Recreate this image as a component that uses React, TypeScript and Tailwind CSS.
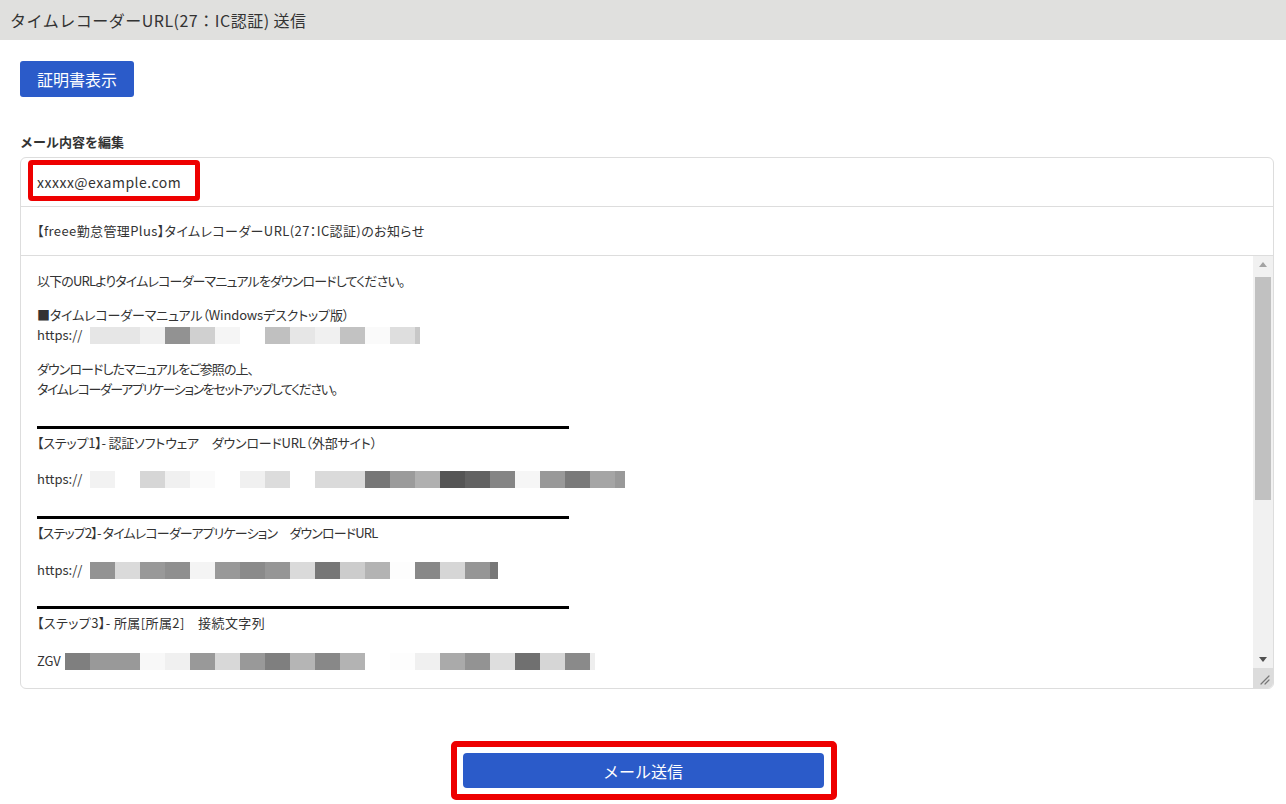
import React from 'react';

const FONT = "font-['Noto_Sans_CJK_JP','Noto_Sans',sans-serif]";

// mosaic blocks hiding the urls (25px cells, last one may be partial)
const url1 = ['#e6e6e6', '#e6e6e6', '#f0f0f0', '#929292', '#d0d0d0', '#f5f5f5', '#ffffff', '#c0c0c0', '#e6e6e6', '#f0f0f0', '#c2c2c2', '#fafafa', '#dedede'];
const url2 = ['#f2f2f2', '#ffffff', '#d6d6d6', '#f0f0f0', '#fafafa', '#ffffff', '#f0f0f0', '#dcdcdc', '#ffffff', '#dadada', '#dadada', '#777777', '#9b9b9b', '#b0b0b0', '#555555', '#626262', '#858585', '#f6f6f6', '#999999', '#7a7a7a', '#a5a5a5'];
const url3 = ['#939393', '#dadada', '#999999', '#8f8f8f', '#f4f4f4', '#999999', '#8a8a8a', '#969696', '#dadada', '#777777', '#cccccc', '#b3b3b3', '#fdfdfd', '#888888', '#d6d6d6', '#969696'];
const url4 = ['#7f7f7f', '#999999', '#999999', '#f8f8f8', '#f0f0f0', '#999999', '#d8d8d8', '#999999', '#7f7f7f', '#b5b5b5', '#888888', '#b3b3b3', '#ffffff', '#fdfdfd', '#f0f0f0', '#aaaaaa', '#939393', '#dedede', '#707070', '#d6d6d6', '#8a8a8a'];

function Mosaic({ cells, tail, tailWidth }: { cells: string[]; tail: string; tailWidth: number }) {
  return (
    <span className="inline-flex h-[17px]">
      {cells.map((c, i) => (
        <span key={i} className="w-[25px] h-full" style={{ backgroundColor: c }} />
      ))}
      <span className="h-full" style={{ backgroundColor: tail, width: tailWidth }} />
    </span>
  );
}

function Line({ children, className = '' }: { children: React.ReactNode; className?: string }) {
  return <div className={`h-[20px] leading-[20px] flex items-center whitespace-nowrap ${className}`}>{children}</div>;
}

function Separator({ className = '' }: { className?: string }) {
  return <div className={`w-[532px] h-[3px] bg-black ${className}`} />;
}

export default function App() {
  return (
    <div className={`${FONT} bg-white min-h-[804px] text-[#333]`}>
      {/* title bar */}
      <div className="h-[40px] bg-[#e0e0de] flex items-center px-[10px] text-[16px] tracking-[0.5px] text-[#333]">
        タイムレコーダーURL(27：IC認証) 送信
      </div>

      <div className="px-[20px]">
        <button className="mt-[21px] h-[36px] w-[114px] rounded-[3px] bg-[#2b5bc9] text-white text-[16px] flex items-center justify-center">
          証明書表示
        </button>

        <div className="mt-[35px] h-[20px] leading-[20px] text-[13px] font-bold text-[#333]">メール内容を編集</div>

        {/* mail editor card */}
        <div className="mt-[5px] w-[1254px] border border-[#dddddd] rounded-[6px] overflow-hidden [font-feature-settings:'palt']">
          <div className="relative h-[49px] border-b border-[#dddddd] flex items-center pl-[16px] text-[14px] tracking-[0.5px]">
            xxxxx@example.com
            <div className="absolute left-[7px] top-[2px] w-[172px] h-[41px] border-[5px] border-[#ee0000] rounded-[4px]" />
          </div>
          <div className="h-[49px] border-b border-[#dddddd] flex items-center pl-[16px] text-[13px] tracking-[0.4px]">
            【freee勤怠管理Plus】タイムレコーダーURL(27：IC認証)のお知らせ
          </div>

          <div className="h-[432px] flex">
            <div className="flex-1 pl-[16px] pt-[15px] text-[13px] text-[#333]">
              <Line className="tracking-[-0.85px]">以下のURLよりタイムレコーダーマニュアルをダウンロードしてください。</Line>
              <Line className="mt-[14px] tracking-[-0.15px]">■タイムレコーダーマニュアル（Windowsデスクトップ版）</Line>
              <Line>
                <span className="w-[53px]">https://</span>
                <Mosaic cells={url1} tail="#c8c8c8" tailWidth={5} />
              </Line>
              <Line className="mt-[14px] tracking-[-0.9px]">ダウンロードしたマニュアルをご参照の上、</Line>
              <Line className="tracking-[-1.4px]">タイムレコーダーアプリケーションをセットアップしてください。</Line>

              <Separator className="mt-[27px]" />
              <Line className="mt-[4px] tracking-[-0.2px]">【ステップ1】- 認証ソフトウェア　ダウンロードURL（外部サイト）</Line>
              <Line className="mt-[16px]">
                <span className="w-[53px]">https://</span>
                <Mosaic cells={url2} tail="#999999" tailWidth={10} />
              </Line>

              <Separator className="mt-[27px]" />
              <Line className="mt-[4px] tracking-[-0.85px]">【ステップ2】- タイムレコーダーアプリケーション　ダウンロードURL</Line>
              <Line className="mt-[17px]">
                <span className="w-[53px]">https://</span>
                <Mosaic cells={url3} tail="#777777" tailWidth={8} />
              </Line>

              <Separator className="mt-[26px]" />
              <Line className="mt-[4px] tracking-[0.4px]">【ステップ3】- 所属[所属2]　接続文字列</Line>
              <Line className="mt-[18px]">
                <span className="w-[28px]">ZGV</span>
                <Mosaic cells={url4} tail="#eeeeee" tailWidth={5} />
              </Line>
            </div>

            {/* textarea scrollbar */}
            <div className="w-[20px] flex flex-col bg-[#f1f1f1]">
              <div className="h-[17px] flex items-center justify-center">
                <svg width="8" height="5" viewBox="0 0 8 5"><path d="M0 5 L4 0 L8 5 Z" fill="#a3a3a3" /></svg>
              </div>
              <div className="flex-1 px-[2px] pt-[4px]">
                <div className="h-[223px] bg-[#c1c1c1]" />
              </div>
              <div className="h-[17px] flex items-center justify-center">
                <svg width="8" height="5" viewBox="0 0 8 5"><path d="M0 0 L8 0 L4 5 Z" fill="#505050" /></svg>
              </div>
              <div className="h-[20px] bg-[#dcdcdc] flex items-end justify-end pr-[3px] pb-[3px]">
                <svg width="11" height="11" viewBox="0 0 11 11">
                  <path d="M10 2 L2 10 M10 6 L6 10" stroke="#777" strokeWidth="1.2" strokeLinecap="round" />
                </svg>
              </div>
            </div>
          </div>
        </div>
      </div>

      {/* send button */}
      <div className="mt-[64px] flex justify-center">
        <div className="relative">
          <button className="h-[35px] w-[361px] rounded-[4px] bg-[#2b5bc9] text-white text-[16px] flex items-center justify-center">
            メール送信
          </button>
          <div className="absolute -left-[12px] -top-[12px] -right-[13px] -bottom-[12px] border-[6px] border-[#ee0000] rounded-[5px]" />
        </div>
      </div>
    </div>
  );
}
